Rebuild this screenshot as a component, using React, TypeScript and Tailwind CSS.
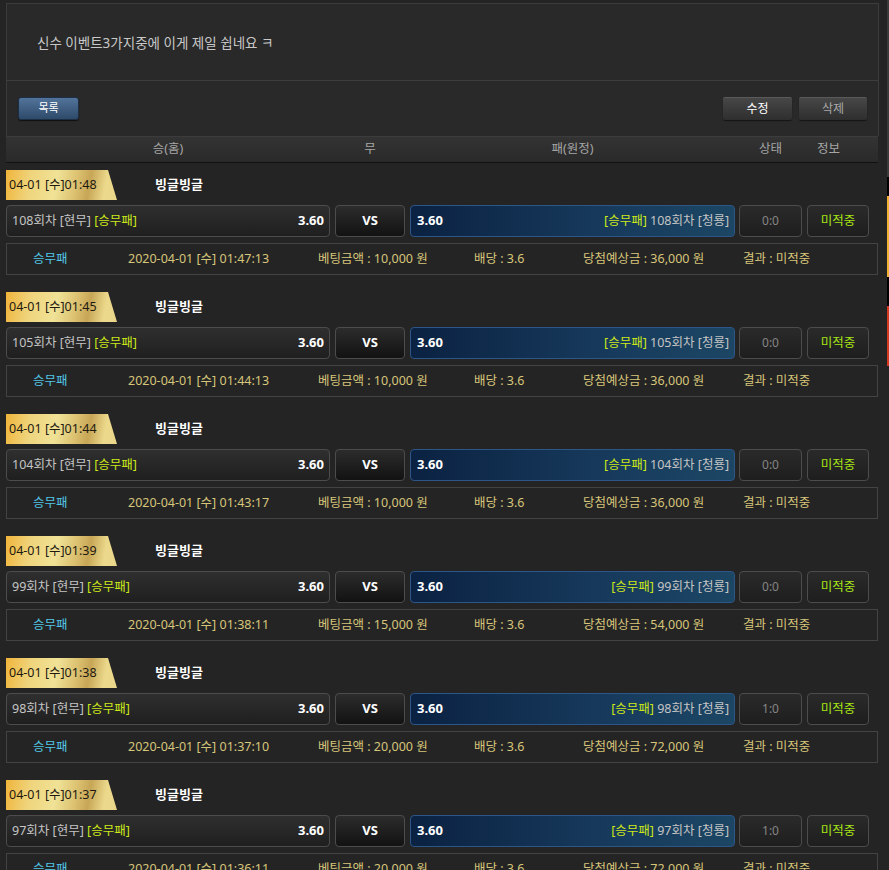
import React from "react";

type Row = {
  time: string;
  round: string;
  score: string;
  placed: string;
  bet: string;
  win: string;
};

const rows: Row[] = [
  { time: "04-01 [수]01:48", round: "108회차", score: "0:0", placed: "2020-04-01 [수] 01:47:13", bet: "10,000", win: "36,000" },
  { time: "04-01 [수]01:45", round: "105회차", score: "0:0", placed: "2020-04-01 [수] 01:44:13", bet: "10,000", win: "36,000" },
  { time: "04-01 [수]01:44", round: "104회차", score: "0:0", placed: "2020-04-01 [수] 01:43:17", bet: "10,000", win: "36,000" },
  { time: "04-01 [수]01:39", round: "99회차", score: "0:0", placed: "2020-04-01 [수] 01:38:11", bet: "15,000", win: "54,000" },
  { time: "04-01 [수]01:38", round: "98회차", score: "1:0", placed: "2020-04-01 [수] 01:37:10", bet: "20,000", win: "72,000" },
  { time: "04-01 [수]01:37", round: "97회차", score: "1:0", placed: "2020-04-01 [수] 01:36:11", bet: "20,000", win: "72,000" },
];

function BetBlock({ r }: { r: Row }) {
  return (
    <div className="mb-[17px]">
      <div className="flex items-center h-[30px]">
        <div className="w-[111px] h-[30px] flex items-center pl-[3px] text-[12.5px] text-[#1e1a10] [clip-path:polygon(0_0,102px_0,111px_100%,0_100%)] bg-[linear-gradient(100deg,#f0b43a_0%,#efd47c_22%,#f0e296_45%,#dcc271_62%,#c7a656_74%,#ecd98c_88%,#e9d68a_100%)]">
          {r.time}
        </div>
        <div className="ml-[38px] text-[13px] font-bold text-white">빙글빙글</div>
      </div>
      <div className="flex h-[32px] mt-[5px] w-[863px]">
        <div className="w-[324px] rounded-[4px] border border-[#4c4c4c] bg-[linear-gradient(#2f2f2f,#1f1f1f)] flex items-center justify-between pl-[5px] pr-[5px] text-[12.5px]">
          <span className="text-[#c4c4c4]">
            {r.round} [현무] <span className="text-[#cbe818]">[승무패]</span>
          </span>
          <span className="font-bold text-white text-[13px]">3.60</span>
        </div>
        <div className="ml-[5px] w-[70px] rounded-[4px] border border-[#4c4c4c] bg-[linear-gradient(#2c2c2c,#121212)] flex items-center justify-center font-bold text-white text-[13px]">
          VS
        </div>
        <div className="ml-[5px] w-[325px] rounded-[4px] border border-[#2c5686] bg-[linear-gradient(90deg,#0b2242,#173a5c_60%,#1c4664)] flex items-center justify-between pl-[6px] pr-[5px] text-[12.5px]">
          <span className="font-bold text-white text-[13px]">3.60</span>
          <span className="text-[#c4c4c4]">
            <span className="text-[#cbe818]">[승무패]</span> {r.round} [청룡]
          </span>
        </div>
        <div className="ml-[4px] w-[63px] rounded-[4px] border border-[#4c4c4c] bg-[linear-gradient(#2a2a2a,#1e1e1e)] flex items-center justify-center text-[12px] text-[#858585]">
          {r.score}
        </div>
        <div className="ml-[5px] w-[62px] rounded-[4px] border border-[#4c4c4c] bg-[linear-gradient(#2a2a2a,#1e1e1e)] flex items-center justify-center text-[12.5px] text-[#a6e414]">
          미적중
        </div>
      </div>
      <div className="flex items-center h-[32px] mt-[6px] w-[872px] border border-[#434343] text-[12.5px] text-[#d7c57a]">
        <div className="w-[121px] pl-[26px] text-[#52c6e6]">승무패</div>
        <div className="w-[190px]">{r.placed}</div>
        <div className="w-[156px]">베팅금액 : {r.bet} 원</div>
        <div className="w-[109px]">배당 : 3.6</div>
        <div className="w-[160px]">당첨예상금 : {r.win} 원</div>
        <div>결과 : 미적중</div>
      </div>
    </div>
  );
}

export default function App() {
  return (
    <div
      className="w-[889px] h-[870px] overflow-hidden bg-[#242424] flex items-start"
      style={{ fontFamily: '"Noto Sans", "Noto Sans CJK KR", sans-serif' }}
    >
      <div className="w-[879px] shrink-0 pl-[6px]">
        <div className="mt-[3px] border-t border-l border-r border-[#3b3b3b] bg-[#282928] w-[873px]">
          <div className="h-[76px] flex items-center pl-[30px] pt-[2px] text-[13.5px] text-[#c8c8c8]">
            신수 이벤트3가지중에 이게 제일 쉽네요 ㅋ
          </div>
          <div className="h-[56px] border-t border-[#3d3d3d] flex items-start pt-[16px] px-[11px]">
            <button className="w-[61px] h-[23px] rounded-[3px] bg-[linear-gradient(#52739a,#2e4a6a)] border border-[#1d2f45] shadow-[0_1px_1px_rgba(0,0,0,0.6)] text-[11px] text-white">
              목록
            </button>
            <div className="ml-auto flex gap-[7px]">
              <button className="w-[69px] h-[23px] rounded-[2px] bg-[linear-gradient(#474747,#2e2e2e)] border-t border-[#5a5a5a] shadow-[0_1px_1px_rgba(0,0,0,0.5)] text-[12px] text-white">
                수정
              </button>
              <button className="w-[68px] h-[23px] rounded-[2px] bg-[linear-gradient(#474747,#2e2e2e)] border-t border-[#5a5a5a] shadow-[0_1px_1px_rgba(0,0,0,0.5)] text-[12px] text-[#a8a8a8]">
                삭제
              </button>
            </div>
          </div>
        </div>
        <div className="w-[872px] h-[27px] bg-[linear-gradient(#333333,#2a2a2a)] border-t border-[#3c3c3c] border-b border-b-[#111] flex items-center text-[12.5px] text-[#a6a6a6]">
          <div className="w-[324px] text-center">승(홈)</div>
          <div className="ml-[5px] w-[70px] text-center">무</div>
          <div className="ml-[5px] w-[325px] text-center">패(원정)</div>
          <div className="ml-[4px] w-[63px] text-center">상태</div>
          <div className="ml-[5px] w-[43px] text-center">정보</div>
        </div>
        <div className="mt-[7px]">
          {rows.map((r) => (
            <BetBlock key={r.round} r={r} />
          ))}
        </div>
      </div>
      <div className="flex-1" />
      <div className="w-[2px] h-[870px] shrink-0 flex flex-col">
        <div className="h-[177px] shrink-0 bg-[#3a3a3a]" />
        <div className="h-[19px] shrink-0 bg-black" />
        <div className="h-[81px] shrink-0 bg-[#f2b231]" />
        <div className="h-[29px] shrink-0 bg-black" />
        <div className="h-[60px] shrink-0 bg-[#d4391f]" />
        <div className="flex-1 bg-[#242424]" />
      </div>
    </div>
  );
}
